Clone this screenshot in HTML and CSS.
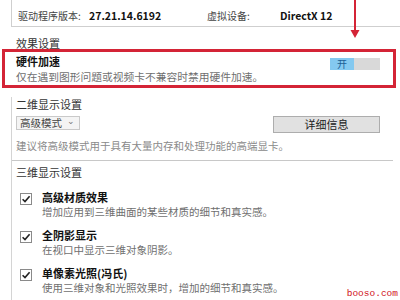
FILE: index.html
```html
<!DOCTYPE html>
<html lang="zh-CN">
<head>
<meta charset="utf-8">
<link rel="stylesheet" href="styles.css">
</head>
<body>
<div class="page">
  <div class="top-box">
    <span class="lbl">驱动程序版本:</span>
    <span class="val">27.21.14.6192</span>
    <span class="lbl">虚拟设备:</span>
    <span class="val">DirectX 12</span>
  </div>

  <div class="heading first">效果设置</div>

  <div class="hw">
    <div class="hw-row">
      <span class="title">硬件加速</span>
      <span class="toggle"><span class="on">开</span><span class="off"></span></span>
    </div>
    <div class="desc hw-desc">仅在遇到图形问题或视频卡不兼容时禁用硬件加速。</div>
  </div>

  <div class="lower">
    <div class="heading h2d">二维显示设置</div>
    <div class="ctrl-row">
      <span class="dropdown">高级模式<span class="chev">⌄</span></span>
      <span class="button">详细信息</span>
    </div>
    <div class="desc light">建议将高级模式用于具有大量内存和处理功能的高端显卡。</div>
    <div class="sep"></div>
    <div class="heading h3d">三维显示设置</div>

    <div class="item">
      <span class="check"><svg viewBox="0 0 12 12" width="12" height="12"><path d="M2.6 6.2 L5 8.6 L9.6 3.2" fill="none" stroke="#222" stroke-width="1.6"/></svg></span>
      <div class="item-text">
        <div class="title">高级材质效果</div>
        <div class="desc">增加应用到三维曲面的某些材质的细节和真实感。</div>
      </div>
    </div>
    <div class="item">
      <span class="check"><svg viewBox="0 0 12 12" width="12" height="12"><path d="M2.6 6.2 L5 8.6 L9.6 3.2" fill="none" stroke="#222" stroke-width="1.6"/></svg></span>
      <div class="item-text">
        <div class="title">全阴影显示</div>
        <div class="desc">在视口中显示三维对象阴影。</div>
      </div>
    </div>
    <div class="item">
      <span class="check"><svg viewBox="0 0 12 12" width="12" height="12"><path d="M2.6 6.2 L5 8.6 L9.6 3.2" fill="none" stroke="#222" stroke-width="1.6"/></svg></span>
      <div class="item-text">
        <div class="title">单像素光照(冯氏)</div>
        <div class="desc">使用三维对象和光照效果时，增加的细节和真实感。</div>
      </div>
    </div>
  </div>

  <svg class="arrow" width="12" height="40" viewBox="0 0 12 40">
    <rect x="5" y="0" width="2" height="32" fill="#d42436"/>
    <path d="M1.5 30 L10.5 30 L6 38 Z" fill="#d42436"/>
  </svg>
  <div class="watermark">booso.com</div>
</div>
</body>
</html>
```

FILE: styles.css
```css
* { box-sizing: border-box; }
html, body { margin: 0; padding: 0; background: #fff; }
body {
  font-family: "Noto Sans CJK SC", "Noto Sans", sans-serif;
  font-size: 11px;
  color: #222;
}
.page {
  position: relative;
  width: 400px;
  height: 300px;
  overflow: hidden;
}
.top-box {
  margin-left: 11px;
  height: 27px;
  border-left: 1px solid #cfcfcf;
  border-bottom: 1px solid #cfcfcf;
  padding: 8px 0 0 6px;
  display: grid;
  grid-template-columns: 71px 118px 73px auto;
  line-height: 16px;
  font-size: 10px;
}
.top-box .lbl { color: #444; }
.top-box .val { color: #111; font-weight: 700; font-size: 10.5px; }

.heading {
  color: #333;
  line-height: 14px;
  padding-left: 5px;
}
.heading.first {
  margin: 10px 0 0 11px;
  line-height: 12px;
}
.hw {
  margin: 0 4px 0 2px;
  border: 3px solid #d42436;
  padding: 2px 13px 1px 11px;
}
.hw-row {
  display: flex;
  justify-content: space-between;
  align-items: flex-start;
}
.title {
  font-weight: 700;
  color: #111;
  line-height: 15px;
}
.hw .title { line-height: 14px; }
.desc {
  color: #6f6f6f;
  font-size: 10.5px;
  line-height: 14px;
}
.hw-desc { font-size: 10.75px; }
.desc.light { color: #8a8a8a; padding-left: 4px; }
.toggle {
  display: flex;
  margin-top: 4px;
  height: 12px;
}
.toggle .on {
  width: 24px;
  background: #84c9f0;
  color: #1d5f95;
  font-size: 10px;
  line-height: 12px;
  text-align: center;
}
.toggle .off {
  width: 26px;
  background: #d9d9d9;
}

.lower {
  margin: 0 7px 0 11px;
  border-left: 1px solid #d4d4d4;
  height: 214px;
}
.h2d { margin-top: 9px; padding-left: 4px; }
.ctrl-row {
  display: flex;
  justify-content: space-between;
  align-items: flex-start;
  margin-top: 5px;
  padding: 0 13px 0 4px;
}
.dropdown {
  width: 64px;
  height: 14px;
  border: 1px solid #c9c9c9;
  background: #f4f4f4;
  color: #444;
  font-size: 10.5px;
  line-height: 12px;
  padding-left: 3px;
  display: flex;
  align-items: center;
  gap: 5px;
}
.dropdown .chev {
  font-size: 9px;
  color: #777;
  line-height: 6px;
  margin-top: -4px;
}
.button {
  width: 107px;
  height: 17px;
  border: 1px solid #adadad;
  background: #e1e1e1;
  color: #222;
  text-align: center;
  line-height: 15px;
}
.lower > .desc.light { margin-top: 6px; }
.sep {
  margin-top: 7px;
  height: 1px;
  background: #c8c8c8;
}
.h3d { margin-top: 4px; padding-left: 4px; }
.item {
  display: flex;
  align-items: flex-start;
  margin-top: 9px;
  padding-left: 8px;
}
.h3d + .item { margin-top: 11px; }
.check {
  width: 12px;
  height: 12px;
  border: 1px solid #8a8a8a;
  background: #fff;
  margin-top: 3px;
  margin-right: 10px;
  display: flex;
}
.check svg { margin: -1px; }
.arrow {
  position: absolute;
  left: 349px;
  top: 0;
}
.watermark {
  position: absolute;
  right: 2px;
  bottom: 1px;
  font-family: "Liberation Mono", monospace;
  font-size: 9.5px;
  line-height: 11px;
  color: #d01020;
}
```
